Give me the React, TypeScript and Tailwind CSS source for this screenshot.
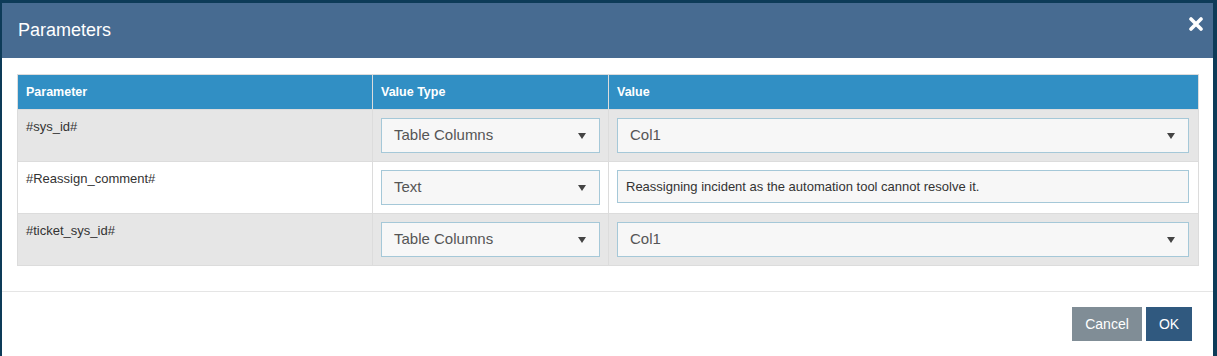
const rows = [
  { name: "#sys_id#", type: "Table Columns", value: "Col1", input: false, shade: true },
  {
    name: "#Reassign_comment#",
    type: "Text",
    value: "Reassigning incident as the automation tool cannot resolve it.",
    input: true,
    shade: false,
  },
  { name: "#ticket_sys_id#", type: "Table Columns", value: "Col1", input: false, shade: true },
];

function Caret() {
  return (
    <svg width="8" height="6" viewBox="0 0 8 6" className="shrink-0">
      <path d="M0 0h8L4 6z" fill="#444" />
    </svg>
  );
}

function SelectBox({ label }: { label: string }) {
  return (
    <div className="flex h-[35px] items-center justify-between border border-[#a5c8d8] bg-[#f7f7f7] pl-[12px] pr-[13px] text-[15px] text-[#555]">
      <span>{label}</span>
      <Caret />
    </div>
  );
}

export default function App() {
  return (
    <div
      className="h-[356px] w-[1217px] overflow-hidden bg-[#0d3b58] pl-[2px] pr-[4px] pt-[3px]"
      style={{ fontFamily: '"Liberation Sans", Arial, sans-serif' }}
    >
      <div className="h-full bg-white">
        <div className="flex h-[55px] items-center justify-between bg-[#476b91] pl-[16px] pr-[8px]">
          <h2 className="text-[18px] text-white">Parameters</h2>
          <button className="-mt-[14px] p-[2px]" title="Close">
            <svg width="14" height="14" viewBox="0 0 14 14">
              <path d="M2 2l10 10M12 2L2 12" stroke="#fff" strokeWidth="3.6" strokeLinecap="round" />
            </svg>
          </button>
        </div>

        <div className="pl-[15px] pr-[14px] pt-[16px] pb-[25px]">
          <table className="w-full border-collapse border border-[#dcdcdc] text-[13px] text-[#333]">
            <thead>
              <tr className="h-[35px] bg-[#318fc4] text-left text-[12.5px] font-bold text-white">
                <th className="w-[355px] border-r border-[#dcdcdc] px-[8px]">Parameter</th>
                <th className="w-[236px] border-r border-[#dcdcdc] px-[8px]">Value Type</th>
                <th className="px-[8px]">Value</th>
              </tr>
            </thead>
            <tbody>
              {rows.map((r) => (
                <tr key={r.name} className={r.shade ? "bg-[#e6e6e6]" : "bg-white"}>
                  <td className="h-[52px] border-t border-r border-[#dcdcdc] px-[8px] pt-[7px] align-top">
                    {r.name}
                  </td>
                  <td className="border-t border-r border-[#dcdcdc] pl-[8px] pr-[8px] align-top pt-[8px]">
                    <SelectBox label={r.type} />
                  </td>
                  <td className="border-t border-[#dcdcdc] pl-[8px] pr-[9px] align-top pt-[8px]">
                    {r.input ? (
                      <div className="flex h-[33px] items-center border border-[#a5c8d8] bg-[#f7f7f7] px-[8px] text-[13px] text-[#333]">
                        {r.value}
                      </div>
                    ) : (
                      <SelectBox label={r.value} />
                    )}
                  </td>
                </tr>
              ))}
            </tbody>
          </table>
        </div>

        <div className="flex justify-end gap-[4px] border-t border-[#e5e5e5] pr-[21px] pt-[15px]">
          <button className="h-[34px] w-[70px] bg-[#808d96] text-[14px] text-white">Cancel</button>
          <button className="h-[34px] w-[46px] bg-[#30597f] text-[14px] text-white">OK</button>
        </div>
      </div>
    </div>
  );
}
